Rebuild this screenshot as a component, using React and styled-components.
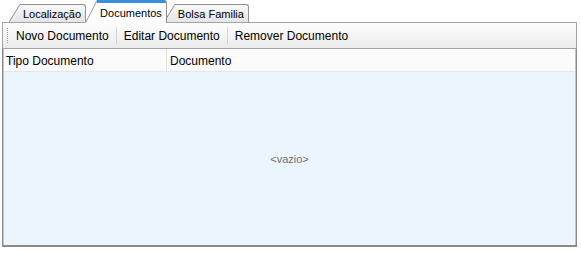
import React, { useId } from "react";
import styled, { createGlobalStyle } from "styled-components";

const GlobalStyle = createGlobalStyle`
  body {
    margin: 0;
    background: #ffffff;
    font-family: "Liberation Sans", Arial, sans-serif;
    color: #000;
  }
`;

const Wrap = styled.div`
  width: 575px;
  margin-left: 2px;
`;

// tab strip above the toolbar
const TabStrip = styled.div`
  display: flex;
  align-items: flex-end;
  height: 23px;
  padding-left: 6px;
`;

const TabItem = styled.div`
  display: flex;
  height: ${(p) => (p.$selected ? "23px" : "19px")};
  margin-left: ${(p) => p.$shift || 0}px;
  position: relative;
  z-index: ${(p) => (p.$selected ? 2 : 0)};
  cursor: default;
`;

const SlantSvg = styled.svg`
  width: 12px;
  height: 100%;
  display: block;
  flex: none;
`;

const TabBody = styled.div`
  display: flex;
  align-items: center;
  padding: 0 4px 0 3px;
  font-size: 11px;
  border-top: ${(p) => (p.$selected ? "3px solid #3b8de4" : "1px solid #8f8f8f")};
  border-right: 1px solid #8f8f8f;
  border-top-right-radius: 3px;
  background: ${(p) =>
    p.$selected ? "#ffffff" : "linear-gradient(#f8f8f8, #e4e4e4)"};
  white-space: nowrap;
`;

const Tab = ({ label, selected, shift }) => {
  const id = useId().replace(/:/g, "");
  return (
    <TabItem $selected={selected} $shift={shift}>
      <SlantSvg viewBox="0 0 12 20" preserveAspectRatio="none">
        <defs>
          <linearGradient id={`g${id}`} x1="0" y1="0" x2="0" y2="1">
            <stop offset="0" stopColor="#f8f8f8" />
            <stop offset="1" stopColor="#e4e4e4" />
          </linearGradient>
        </defs>
        <path
          d="M0 20 L12 0 L12 20 Z"
          fill={selected ? "#ffffff" : `url(#g${id})`}
        />
        <path
          d="M0.5 20 L12 0.3"
          fill="none"
          stroke={selected ? "#9a9a9a" : "#8f8f8f"}
          strokeWidth="1"
          vectorEffect="non-scaling-stroke"
        />
      </SlantSvg>
      <TabBody $selected={selected}>{label}</TabBody>
    </TabItem>
  );
};

const Toolbar = styled.div`
  position: relative;
  z-index: 1;
  margin-top: -1px;
  height: 27px;
  box-sizing: border-box;
  border: 1px solid #a3a3a3;
  background: linear-gradient(#fdfdfd, #ebebeb);
  display: flex;
  align-items: center;
  padding-left: 4px;
`;

const Grip = styled.div`
  width: 2px;
  height: 16px;
  background-image: linear-gradient(#9c9c9c 50%, transparent 50%);
  background-size: 1px 2px;
  background-repeat: repeat-y;
`;

const ToolButton = styled.div`
  padding: 0 7px;
  font-size: 12px;
  line-height: 20px;
  white-space: nowrap;
  cursor: default;
`;

const ToolSep = styled.div`
  width: 1px;
  height: 17px;
  background: #d4d4d4;
`;

const Grid = styled.div`
  height: 198px;
  box-sizing: border-box;
  border: 1px solid #8a8a8a;
  border-top: none;
  border-bottom-width: 2px;
  box-shadow: inset 1px 0 #c4c4c4, inset -1px 0 #c4c4c4;
  display: flex;
  flex-direction: column;
  padding: 0 1px;
`;

const HeaderRow = styled.div`
  display: grid;
  grid-template-columns: 163px 1fr;
  height: 23px;
  box-sizing: border-box;
  border-bottom: 1px solid #e6e6e6;
  background: #fbfbfb;
`;

const HeaderCell = styled.div`
  display: flex;
  align-items: center;
  padding-top: 1px;
  font-size: 12px;
  border-right: ${(p) => (p.$last ? "none" : "1px solid #e2e2e2")};
  padding-left: ${(p) => (p.$last ? "3px" : "2px")};
`;

const Body = styled.div`
  flex: 1;
  background: #eaf5fd;
  display: flex;
  align-items: center;
  justify-content: center;
`;

const Empty = styled.span`
  font-size: 11px;
  color: #707070;
`;

export default function App() {
  return (
    <>
      <GlobalStyle />
      <Wrap>
        <TabStrip>
          <Tab label="Localização" />
          <Tab label="Documentos" selected shift={-1} />
          <Tab label="Bolsa Familia" shift={-4} />
        </TabStrip>
        <Toolbar>
          <Grip />
          <ToolButton>Novo Documento</ToolButton>
          <ToolSep />
          <ToolButton>Editar Documento</ToolButton>
          <ToolSep />
          <ToolButton>Remover Documento</ToolButton>
        </Toolbar>
        <Grid>
          <HeaderRow>
            <HeaderCell>Tipo Documento</HeaderCell>
            <HeaderCell $last>Documento</HeaderCell>
          </HeaderRow>
          <Body>
            <Empty>&lt;vazio&gt;</Empty>
          </Body>
        </Grid>
      </Wrap>
    </>
  );
}
